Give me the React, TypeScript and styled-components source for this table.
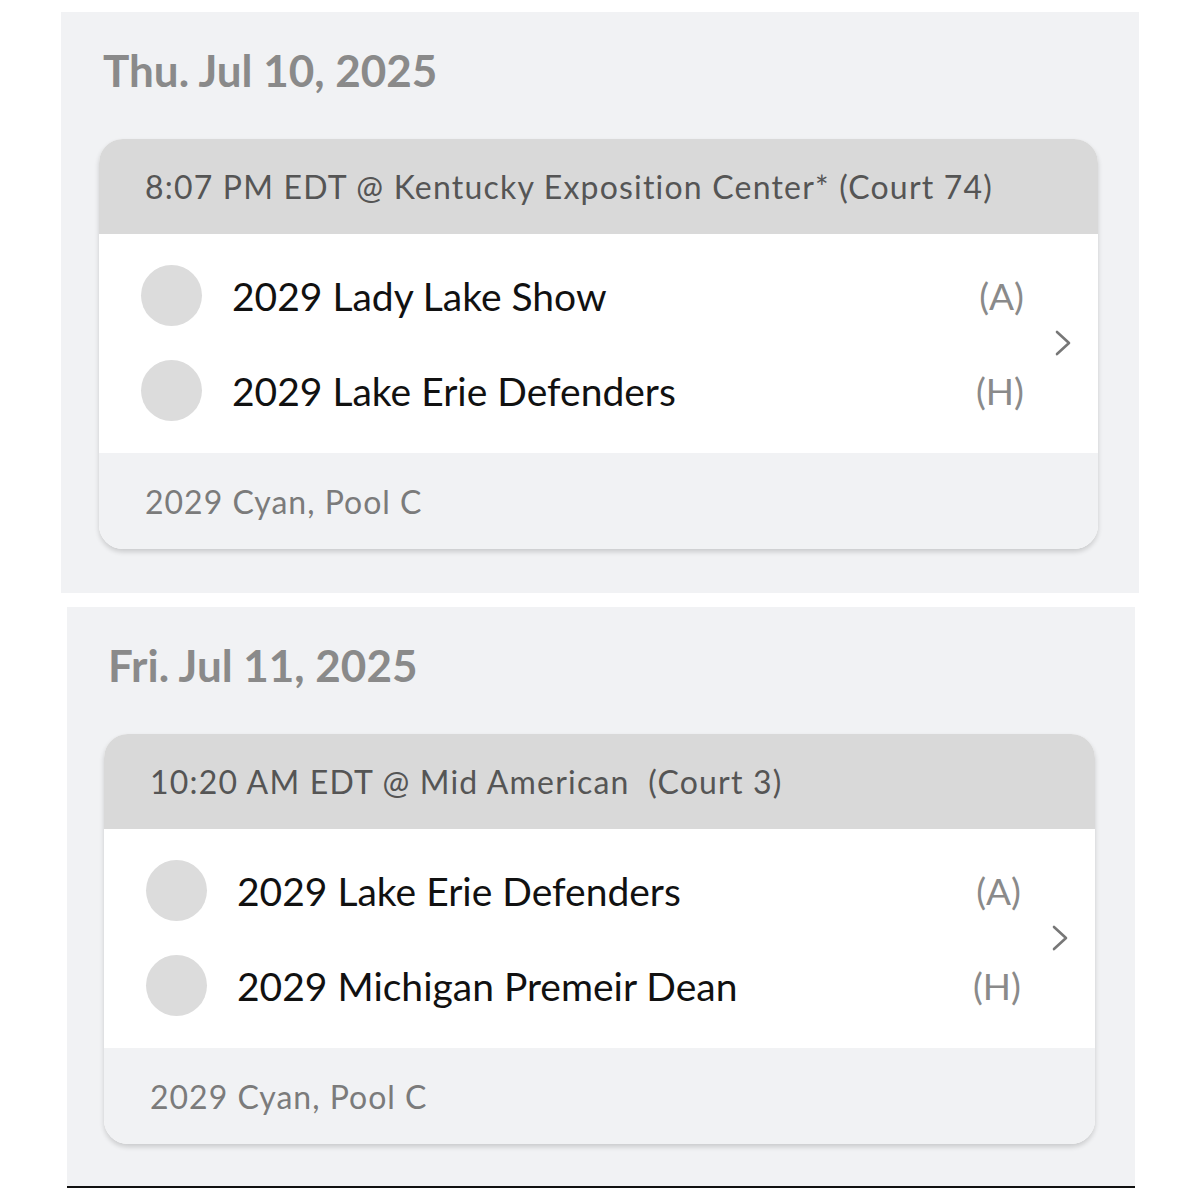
import React from 'react';
import styled, { createGlobalStyle } from 'styled-components';

const GlobalStyle = createGlobalStyle`
  body {
    margin: 0;
    background: #ffffff;
    font-family: Lato, 'Liberation Sans', sans-serif;
  }
`;

const Page = styled.div`
  display: flex;
  flex-direction: column;
  gap: 14px;
  padding-top: 12px;
`;

const Panel = styled.section<{ $left: number; $width: number; $padX: [number, number]; $padBottom: number; $border?: boolean }>`
  margin-left: ${({ $left }) => $left}px;
  width: ${({ $width }) => $width}px;
  box-sizing: border-box;
  background: #f1f2f4;
  padding: 36px ${({ $padX }) => $padX[1]}px ${({ $padBottom }) => $padBottom}px ${({ $padX }) => $padX[0]}px;
  border-bottom: ${({ $border }) => ($border ? '2px solid #111' : 'none')};
`;

const DateHeading = styled.h2`
  margin: 0 0 47px 4px;
  font-size: 44px;
  line-height: 1;
  font-weight: 700;
  color: #8a8a8a;
`;

const Card = styled.div`
  border-radius: 24px;
  overflow: hidden;
  box-shadow: 0 3px 5px rgba(0, 0, 0, 0.16);
  background: #ffffff;
`;

const CardHeader = styled.div`
  height: 95px;
  display: flex;
  align-items: center;
  padding-left: 46px;
  background: #d9d9d9;
  color: #555555;
  font-size: 32px;
  letter-spacing: 1.2px;
  white-space: pre;
`;

const CardBody = styled.div`
  display: flex;
  align-items: center;
  padding: 14px 27px 15px 42px;
  background: #ffffff;
`;

const Rows = styled.div`
  flex: 1;
  display: flex;
  flex-direction: column;
  margin-right: 31px;
`;

const TeamRow = styled.div`
  height: 95px;
  display: flex;
  align-items: center;
`;

const Avatar = styled.div`
  width: 61px;
  height: 61px;
  border-radius: 50%;
  background: #dcdcdc;
  flex-shrink: 0;
`;

const TeamName = styled.div`
  flex: 1;
  margin-left: 30px;
  font-size: 39px;
  color: #111111;
`;

const Side = styled.div`
  font-size: 37px;
  color: #8a8a8a;
`;

const Chevron = styled.svg`
  width: 16px;
  height: 26px;
  flex-shrink: 0;
`;

const CardFooter = styled.div`
  height: 96px;
  display: flex;
  align-items: center;
  padding-left: 46px;
  background: #f1f2f4;
  color: #7b7b7b;
  font-size: 32px;
  letter-spacing: 1px;
`;

type Team = { name: string; side: string };

interface DayProps {
  date: string;
  header: string;
  teams: Team[];
  pool: string;
  left: number;
  width: number;
  padX: [number, number];
  padBottom: number;
  border?: boolean;
}

const Day: React.FC<DayProps> = ({ date, header, teams, pool, left, width, padX, padBottom, border }) => (
  <Panel $left={left} $width={width} $padX={padX} $padBottom={padBottom} $border={border}>
    <DateHeading>{date}</DateHeading>
    <Card>
      <CardHeader>{header}</CardHeader>
      <CardBody>
        <Rows>
          {teams.map((t) => (
            <TeamRow key={t.name}>
              <Avatar />
              <TeamName>{t.name}</TeamName>
              <Side>{t.side}</Side>
            </TeamRow>
          ))}
        </Rows>
        <Chevron viewBox="0 0 16 26">
          <polyline points="2,2 14,13 2,24" fill="none" stroke="#777" strokeWidth="2.6" strokeLinecap="round" strokeLinejoin="round" />
        </Chevron>
      </CardBody>
      <CardFooter>{pool}</CardFooter>
    </Card>
  </Panel>
);

export default function App() {
  return (
    <>
      <GlobalStyle />
      <Page>
        <Day
          date="Thu. Jul 10, 2025"
          header="8:07 PM EDT @ Kentucky Exposition Center* (Court 74)"
          teams={[
            { name: '2029 Lady Lake Show', side: '(A)' },
            { name: '2029 Lake Erie Defenders', side: '(H)' },
          ]}
          pool="2029 Cyan, Pool C"
          left={61}
          width={1078}
          padX={[38, 41]}
          padBottom={44}
        />
        <Day
          date="Fri. Jul 11, 2025"
          header="10:20 AM EDT @ Mid American  (Court 3)"
          teams={[
            { name: '2029 Lake Erie Defenders', side: '(A)' },
            { name: '2029 Michigan Premeir Dean', side: '(H)' },
          ]}
          pool="2029 Cyan, Pool C"
          left={67}
          width={1068}
          padX={[37, 40]}
          padBottom={42}
          border
        />
      </Page>
    </>
  );
}
